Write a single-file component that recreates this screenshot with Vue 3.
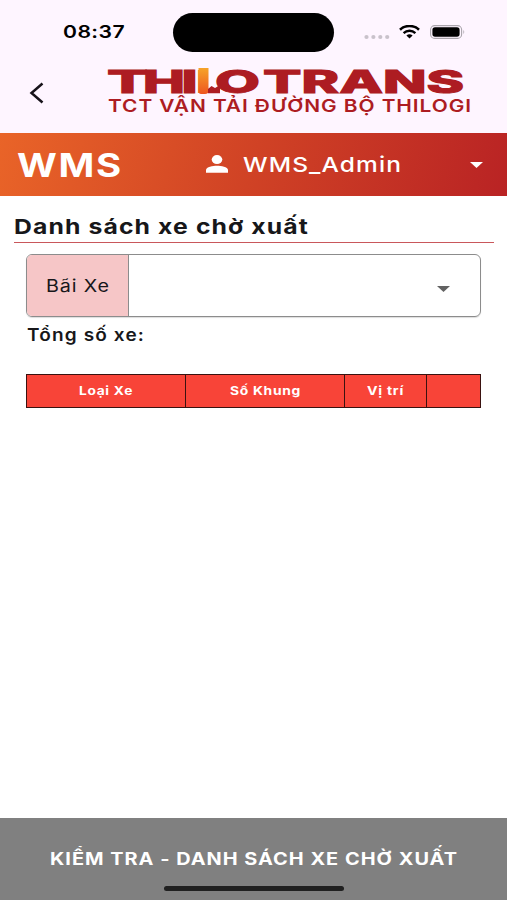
<script setup>
import { h } from 'vue'

// Text set to an exact advance width, giving the wide letterforms of the app.
const Wide = (props) =>
  h('svg', { width: props.w, height: props.size, style: { display: 'block', overflow: 'visible', flexShrink: 0 } }, [
    h('text', {
      x: 0,
      y: props.size * 0.86,
      'font-size': props.size,
      textLength: props.w,
      lengthAdjust: 'spacingAndGlyphs',
      'letter-spacing': props.size * (props.gap ?? 0.045),
      fill: 'currentColor',
    }, props.t),
  ])
Wide.props = ['t', 'w', 'size', 'gap']

// Wordmark letters: start and advance width of each run.
const letters = [
  { t: 'T', x: 0, w: 41 },
  { t: 'H', x: 36, w: 42 },
  { t: 'I', x: 74.5, w: 16 },
  { t: 'O', x: 108, w: 45 },
  { t: 'TRANS', x: 156, w: 201 },
]

const columns = [
  { name: 'Loại Xe', w: 54 },
  { name: 'Số Khung', w: 71 },
  { name: 'Vị trí', w: 37 },
  { name: '', w: 0 },
]
</script>

<template>
  <div class="screen">
    <header class="top">
      <div class="status">
        <div class="time"><Wide t="08:37" :w="62" :size="17.5" :gap="0.02" /></div>
        <div class="island"></div>
        <div class="signals">
          <svg width="26" height="6" viewBox="0 0 26 6" class="dots">
            <circle v-for="i in 4" :key="i" :cx="i * 6.9 - 4.4" cy="3" r="2.1" fill="#c9c2cb" />
          </svg>
          <svg width="21" height="14" viewBox="0 0 21 14" class="wifi">
            <path d="M1 4.7C6.2-.2 14.8-.2 20 4.7" fill="none" stroke="#000" stroke-width="2.6" />
            <path d="M4.6 8.1C8 5 13 5 16.4 8.1" fill="none" stroke="#000" stroke-width="2.4" />
            <path d="M7.4 10.6Q10.5 8 13.6 10.6L10.5 13.5Z" fill="#000" />
          </svg>
          <svg width="36" height="14" viewBox="0 0 36 14" class="battery">
            <rect x=".6" y=".6" width="31" height="12.8" rx="4" fill="none" stroke="#aaa5ac" stroke-width="1.1" />
            <rect x="2.4" y="2.3" width="27.2" height="9.4" rx="2.6" fill="#000" />
            <path d="M33.4 4.8Q35.2 7 33.4 9.2Z" fill="#aaa5ac" />
          </svg>
        </div>
      </div>
      <div class="brand">
        <svg class="back" width="16" height="22" viewBox="0 0 16 22">
          <path d="M13.5 1.5L2.5 11L13.5 20.5" fill="none" stroke="#17131a" stroke-width="2.5" />
        </svg>
        <div class="logo">
          <svg class="wordmark" width="366" height="28" viewBox="0 0 366 28">
            <defs>
              <linearGradient id="flame" x1="0" y1="0" x2="0" y2="1">
                <stop offset="0" stop-color="#f6a329" />
                <stop offset="1" stop-color="#ee5620" />
              </linearGradient>
            </defs>
            <text x="89.5" y="25.5" textLength="17" lengthAdjust="spacingAndGlyphs" class="flame">L</text>
            <path d="M91.5 1H101.5V24Q101.5 27 98 27H94Q91.5 27 91.5 24Z" class="flame" />
            <path d="M101 26.3V22L104.5 19L108 21L113 18V26.3Z" class="hook" />
            <text v-for="l in letters" :key="l.t" :x="l.x" y="25.5" :textLength="l.w" lengthAdjust="spacingAndGlyphs">{{ l.t }}</text>
          </svg>
          <div class="sub"><Wide t="TCT VẬN TẢI ĐƯỜNG BỘ THILOGI" :w="364" :size="17.5" /></div>
        </div>
      </div>
    </header>

    <nav class="bar">
      <div class="wms"><Wide t="WMS" :w="106" :size="32" /></div>
      <svg class="user" width="22" height="18" viewBox="0 0 22 18">
        <ellipse cx="11" cy="4.6" rx="5.3" ry="4.5" fill="#fff" />
        <path d="M0 17.8V15C0 12 7 10.8 11 10.8S22 12 22 15V17.8Z" fill="#fff" />
      </svg>
      <div class="account"><Wide t="WMS_Admin" :w="159" :size="20.5" /></div>
      <svg class="caret" width="13" height="6" viewBox="0 0 13 6"><path d="M0 0H13L6.5 6Z" fill="#fff" /></svg>
    </nav>

    <main>
      <h1><Wide t="Danh sách xe chờ xuất" :w="295" :size="20.5" /></h1>
      <section class="content">
        <div class="field">
          <div class="label"><Wide t="Bãi Xe" :w="64" :size="17" /></div>
          <div class="select">
            <svg width="13" height="6" viewBox="0 0 13 6"><path d="M0 0H13L6.5 6Z" fill="#626262" /></svg>
          </div>
        </div>
        <div class="total"><Wide t="Tổng số xe:" :w="118" :size="17" :gap="0.06" /></div>
        <div class="table">
          <div v-for="(c, i) in columns" :key="i" class="cell">
            <Wide v-if="c.name" :t="c.name" :w="c.w" :size="11.7" :gap="0.05" />
          </div>
        </div>
      </section>
    </main>

    <footer>
      <Wide t="KIỂM TRA - DANH SÁCH XE CHỜ XUẤT" :w="408" :size="17" :gap="0.05" />
      <div class="home"></div>
    </footer>
  </div>
</template>

<style>
body { margin: 0; background: #fff; }
</style>

<style scoped>
.screen { width: 507px; height: 900px; display: flex; flex-direction: column; overflow: hidden; background: #fff; font-family: Inter, "Noto Sans", sans-serif; color: #17171a; }
.top { height: 133px; background: #fef5ff; flex-shrink: 0; }
.status { height: 65px; display: flex; align-items: flex-start; }
.time { width: 110.4px; padding: 23px 0 0 63px; font-weight: 600; color: #000; }
.island { width: 161px; height: 39px; margin-top: 12.5px; border-radius: 20px; background: #000; }
.signals { display: flex; margin: 25px 0 0 29.6px; }
.dots { margin-top: 8.5px; }
.wifi { margin-left: 9px; }
.battery { margin-left: 10px; }
.brand { display: flex; }
.back { margin: 17px 0 0 29px; flex-shrink: 0; }
.logo { margin-left: 62px; }
.wordmark { display: block; margin-top: 2px; overflow: visible; font-size: 31px; font-weight: 800; fill: #ad1c22; stroke: #ad1c22; stroke-width: 1px; }
.wordmark path { stroke: none; }
.wordmark .flame { fill: url(#flame); stroke: none; }
.wordmark .hook { fill: #ad1c22; }
.sub { margin-top: 2px; color: #ad1c22; font-weight: 600; padding-left: 1px; }
.bar { height: 62.5px; flex-shrink: 0; display: flex; align-items: flex-start; background: linear-gradient(105deg, #e96428 0%, #d04225 50%, #b92324 100%); color: #fff; }
.wms { padding: 15.5px 0 0 17px; font-weight: 700; }
.user { margin: 22px 0 0 83px; }
.account { padding: 20.5px 0 0 15px; font-weight: 500; }
.caret { margin: 29px 0 0 67.5px; }
main { flex: 1; padding: 0 13px 0 14px; }
h1 { margin: 0; height: 26.5px; padding-top: 20px; border-bottom: 1px solid #c9575b; font-weight: 700; }
.content { padding: 11px 13px 0 12px; }
.field { height: 63px; box-sizing: border-box; display: flex; border: 1px solid #8c8c8c; border-radius: 6px; overflow: hidden; box-shadow: 0 1px 1px #ddd; }
.label { width: 102px; box-sizing: border-box; padding: 21.5px 0 0 19px; background: #f6c6c7; border-right: 1px solid #8c8c8c; flex-shrink: 0; }
.select { flex: 1; display: flex; justify-content: flex-end; padding: 30.5px 30px 0 0; }
.total { height: 57px; box-sizing: border-box; padding: 8.5px 0 0 1px; font-weight: 600; }
.table { height: 34px; display: grid; grid-template-columns: 159px 159px 82px 1fr; background: #f84438; border: 1.5px solid #3a1210; box-sizing: border-box; }
.cell { display: flex; justify-content: center; align-items: center; border-right: 1.5px solid #3a1210; color: #fff; font-weight: 700; }
.cell:last-child { border-right: 0; }
footer { height: 82px; flex-shrink: 0; box-sizing: border-box; display: flex; flex-direction: column; align-items: center; padding-top: 32px; background: #808080; color: #fff; font-weight: 700; }
.home { width: 180px; height: 5px; margin: 19px 0 0 1px; border-radius: 3px; background: #202020; }
</style>
